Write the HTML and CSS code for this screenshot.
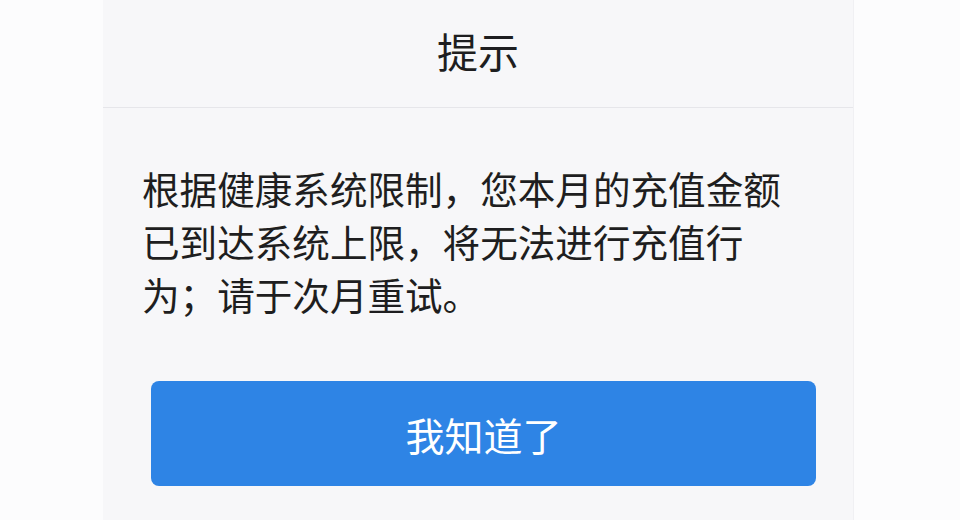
FILE: index.html
```html
<!DOCTYPE html>
<html lang="zh-CN">
<head>
    <meta charset="UTF-8">
    <meta name="viewport" content="width=device-width, initial-scale=1.0">
    <title>提示</title>
    <link rel="stylesheet" href="styles.css">
</head>
<body>

    <div class="dialog">
        <div class="dialog-header">
            <h1 class="dialog-title">提示</h1>
        </div>
        <div class="dialog-body">
            <p class="message">根据健康系统限制，您本月的充值金额已到达系统上限，将无法进行充值行为；请于次月重试。</p>
            <button class="confirm">我知道了</button>
        </div>
    </div>

</body>
</html>
```

FILE: styles.css
```css
body {
    margin: 0;
    background: #fcfcfd;
    font-family: "Noto Sans CJK SC", "Noto Sans", sans-serif;
    color: #1e1e20;
}
.dialog {
    width: 750px;
    min-height: 520px;
    margin-left: 103px;
    background: #f7f7f9;
    border-right: 1px solid #f0f0f3;
}
.dialog-header {
    height: 107px;
    display: flex;
    align-items: center;
    justify-content: center;
    border-bottom: 1px solid #e6e6ea;
}
.dialog-title {
    margin: 0;
    font-size: 41px;
    font-weight: normal;
    line-height: 1;
    padding-bottom: 6px;
}
.dialog-body {
    padding: 53px 0 0 0;
}
.message {
    margin: 0 39px;
    font-size: 37.6px;
    line-height: 53px;
}
.confirm {
    display: block;
    width: 665px;
    height: 105px;
    margin: 61px 0 0 48px;
    border: none;
    border-radius: 8px;
    background: #2e84e5;
    color: #fff;
    font-family: inherit;
    font-size: 39px;
    cursor: pointer;
}
```
